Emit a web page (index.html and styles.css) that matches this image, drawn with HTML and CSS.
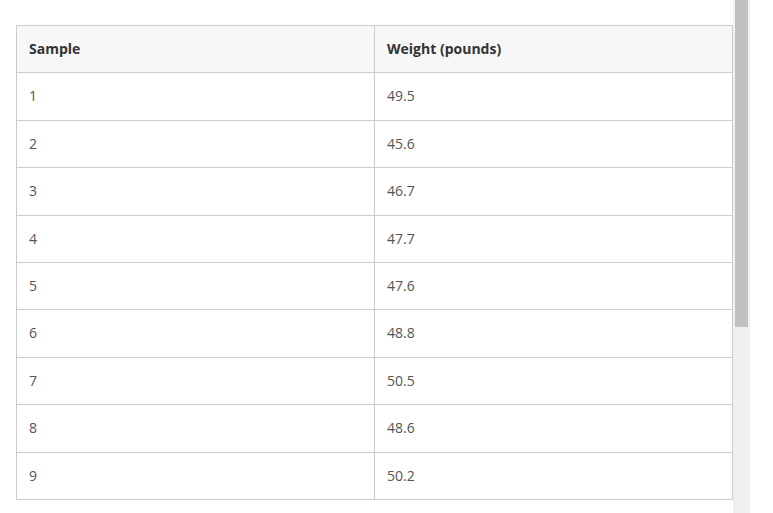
FILE: index.html
```html
<!DOCTYPE html>
<html>
<head>
<meta charset="utf-8">
<link rel="stylesheet" href="styles.css">
</head>
<body>
<div class="page">
  <main class="content">
    <table class="data">
      <thead>
        <tr><th>Sample</th><th>Weight (pounds)</th></tr>
      </thead>
      <tbody>
        <tr><td>1</td><td>49.5</td></tr>
        <tr><td>2</td><td>45.6</td></tr>
        <tr><td>3</td><td>46.7</td></tr>
        <tr><td>4</td><td>47.7</td></tr>
        <tr><td>5</td><td>47.6</td></tr>
        <tr><td>6</td><td>48.8</td></tr>
        <tr><td>7</td><td>50.5</td></tr>
        <tr><td>8</td><td>48.6</td></tr>
        <tr><td>9</td><td>50.2</td></tr>
      </tbody>
    </table>
  </main>
  <div class="scrollbar"><div class="thumb"></div></div>
</div>
</body>
</html>
```
FILE: styles.css
```css
html, body {
  margin: 0;
  padding: 0;
  background: #fff;
}
body {
  font-family: "Open Sans", "Liberation Sans", sans-serif;
  font-size: 14px;
  color: #555;
}
.page {
  display: flex;
  width: 773px;
  height: 513px;
  overflow: hidden;
}
.content {
  width: 717px;
  padding: 25px 0 0 16px;
}
.scrollbar {
  width: 17px;
  height: 513px;
  background: #f0f0f0;
  padding: 0 2px;
  box-sizing: border-box;
}
.thumb {
  height: 327px;
  background: #c1c1c1;
}
.data {
  width: 717px;
  border-collapse: collapse;
  table-layout: fixed;
}
.data th, .data td {
  border: 1px solid #cccccc;
  padding: 12px 12px;
  height: 22.4px;
  line-height: 22.4px;
  text-align: left;
  vertical-align: middle;
}
.data th {
  background: #f7f7f7;
  color: #333;
  font-weight: 700;
}
.data th:first-child, .data td:first-child {
  width: 333px;
}
```
